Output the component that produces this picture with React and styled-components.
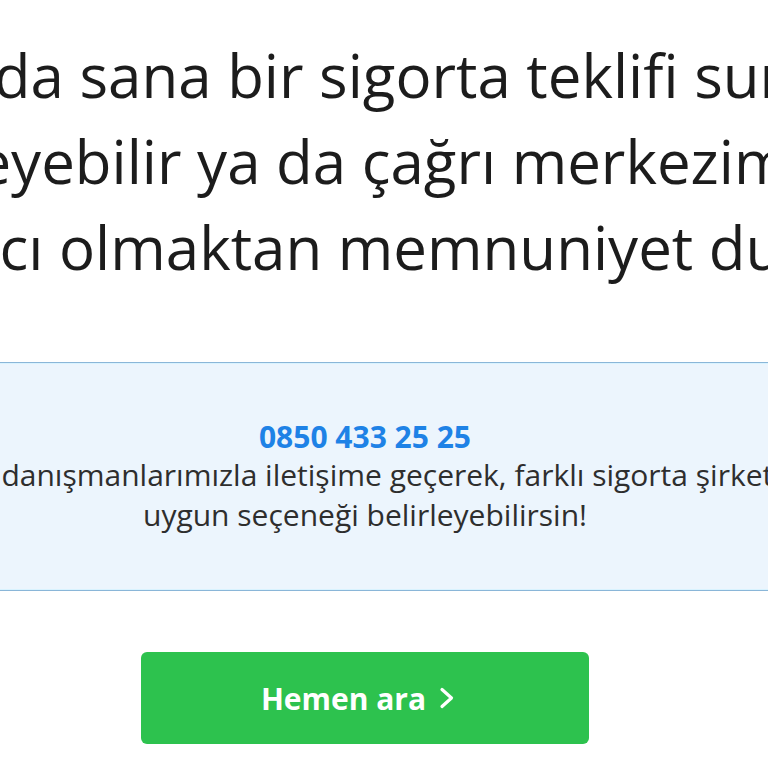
import React from 'react';
import styled, { createGlobalStyle } from 'styled-components';

const GlobalStyle = createGlobalStyle`
  html, body {
    margin: 0;
    padding: 0;
    background: #ffffff;
    overflow: hidden;
  }
  body {
    font-family: 'Open Sans', 'Noto Sans', sans-serif;
    color: #1c1c1c;
  }
`

const headlineLines = [
  'Her konuda sana bir sigorta teklifi sunabiliriz.',
  'Tüm teklifleri inceleyebilir ya da çağrı merkezimizi arayabilirsiniz.',
  'Yardımcı olmaktan memnuniyet duyarız.',
]

const infoLines = [
  'Müşteri danışmanlarımızla iletişime geçerek, farklı sigorta şirketlerini',
  'uygun seçeneği belirleyebilirsin!',
]

const App = () => (
  <>
    <GlobalStyle />
    <Page>
      <Headline>
        {headlineLines.map((line) => (
          <HeadlineLine key={line}>{line}</HeadlineLine>
        ))}
      </Headline>

      <InfoPanel>
        <InfoInner>
          <Phone href="tel:08504332525">0850 433 25 25</Phone>
          {infoLines.map((line) => (
            <InfoLine key={line}>{line}</InfoLine>
          ))}
        </InfoInner>
      </InfoPanel>

      <ButtonRow>
        <CallButton type="button">
          Hemen ara
          <svg width="16" height="22" viewBox="0 0 16 22" fill="none">
            <polyline points="3,2.5 12.5,11 3,19.5" stroke="#ffffff" strokeWidth="3.2" strokeLinecap="round" strokeLinejoin="round" />
          </svg>
        </CallButton>
      </ButtonRow>
    </Page>
  </>
)

export default App

// Styled components
const Page = styled.main`
  width: 768px;
  height: 768px;
  padding-top: 32px;
  box-sizing: border-box;
  overflow: hidden;
`

const Headline = styled.h2`
  width: 730px;
  margin: 0 0 72px 0;
  display: flex;
  flex-direction: column;
  align-items: center;
  font-size: 60px;
  font-weight: 400;
  line-height: 86px;
  color: #1c1c1c;
`

const HeadlineLine = styled.span`
  white-space: nowrap;
`

const InfoPanel = styled.section`
  width: 100%;
  background: #ecf5fd;
  border-top: 1px solid #8ab6d8;
  border-bottom: 1px solid #8ab6d8;
  box-shadow: inset 0 1px 0 #d9f3ff, inset 0 -1px 0 #d9f3ff;
  padding: 60px 0 55px 0;
`

const InfoInner = styled.div`
  width: 730px;
  display: flex;
  flex-direction: column;
  align-items: center;
`

const Phone = styled.a`
  margin-bottom: 4px;
  font-size: 30px;
  font-weight: 700;
  line-height: 28px;
  color: #1e82e6;
  text-decoration: none;
  white-space: nowrap;
`

const InfoLine = styled.p`
  margin: 0;
  font-size: 30px;
  line-height: 40px;
  color: #2e2e2e;
  white-space: nowrap;
`

const ButtonRow = styled.div`
  width: 730px;
  margin-top: 61px;
  display: flex;
  justify-content: center;
`

const CallButton = styled.button`
  width: 448px;
  height: 92px;
  padding: 0 14px 0 0;
  border: none;
  border-radius: 6px;
  background: #2dc24e;
  color: #ffffff;
  font-family: 'Open Sans', 'Noto Sans', sans-serif;
  font-size: 30px;
  font-weight: 700;
  display: flex;
  align-items: center;
  justify-content: center;
  gap: 13px;
  cursor: pointer;
`
